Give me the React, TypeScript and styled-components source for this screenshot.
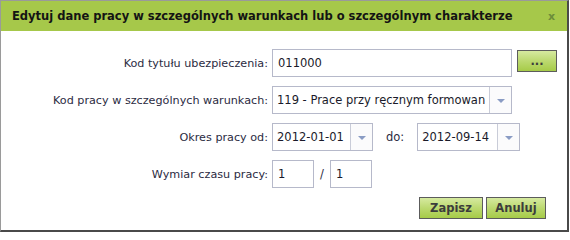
import React from "react";
import styled, { createGlobalStyle } from "styled-components";

const GlobalStyle = createGlobalStyle`
  html, body {
    margin: 0;
    padding: 0;
    background: #ffffff;
  }
  body {
    font-family: "DejaVu Sans", Tahoma, Verdana, sans-serif;
  }
`;

const Dialog = styled.div`
  width: 569px;
  box-sizing: border-box;
  border-top: 1px solid #9a9a9a;
  border-left: 1px solid #9a9a9a;
  border-right: 2px solid #4a4a4a;
  border-bottom: 2px solid #4a4a4a;
  background: #ffffff;
`;

const Header = styled.div`
  height: 30px;
  background: #a6c84a;
  display: flex;
  align-items: center;
  justify-content: space-between;
  padding: 0 12px 0 11px;
`;

const Title = styled.div`
  font-weight: bold;
  font-size: 11.5px;
  color: #141414;
  white-space: nowrap;
`;

const Close = styled.span`
  font-weight: bold;
  font-size: 11px;
  color: #6c8c3a;
  cursor: pointer;
`;

const Body = styled.div`
  padding: 18px 21px 11px 0;
`;

const Form = styled.div`
  display: grid;
  grid-template-columns: 267px 1fr;
  column-gap: 4px;
  row-gap: 9px;
  align-items: center;
`;

const Label = styled.label`
  text-align: right;
  font-size: 11.2px;
  color: #2b2b3f;
  white-space: nowrap;
`;

const Controls = styled.div<{ $gap?: number }>`
  display: flex;
  align-items: center;
  gap: ${({ $gap }) => $gap ?? 5}px;
`;

const TextInput = styled.input<{ $width: number }>`
  box-sizing: border-box;
  width: ${({ $width }) => $width}px;
  height: 28px;
  border: 1px solid #b6b9ca;
  padding: 0 5px;
  margin: 0;
  font-family: inherit;
  font-size: 11.5px;
  color: #1a1a2a;
  background: #ffffff;
  outline: none;
`;

const Combo = styled.div<{ $width: number }>`
  box-sizing: border-box;
  width: ${({ $width }) => $width}px;
  height: 28px;
  border: 1px solid #b6b9ca;
  display: flex;
  background: #ffffff;
`;

const ComboText = styled.div`
  flex: 1;
  min-width: 0;
  overflow: hidden;
  white-space: nowrap;
  padding: 0 4px;
  display: flex;
  align-items: center;
  font-size: 11.5px;
  color: #1a1a2a;
`;

const ComboArrow = styled.div`
  width: 22px;
  flex: none;
  border-left: 1px solid #c9ccd8;
  background: #fbfbfc;
  display: flex;
  align-items: center;
  justify-content: center;
  padding-top: 2px;
  box-sizing: border-box;
`;

const Triangle = styled.span`
  width: 0;
  height: 0;
  border-left: 4px solid transparent;
  border-right: 4px solid transparent;
  border-top: 4px solid #8a9cc4;
`;

const InlineText = styled.span<{ $pad: number }>`
  font-size: 11.5px;
  color: #2b2b3f;
  padding: 0 ${({ $pad }) => $pad}px;
`;

const Footer = styled.div`
  display: flex;
  justify-content: flex-end;
  gap: 3px;
  margin-top: 9px;
`;

const Button = styled.button<{ $width: number; $top?: boolean }>`
  box-sizing: border-box;
  width: ${({ $width }) => $width}px;
  height: 22px;
  margin: 0;
  padding: 0;
  align-self: ${({ $top }) => ($top ? "flex-start" : "auto")};
  margin-top: ${({ $top }) => ($top ? 1 : 0)}px;
  border: 1px solid #5c5c5c;
  background: linear-gradient(to bottom, #d6eaa0 0%, #bcd970 50%, #a6cb48 100%);
  font-family: inherit;
  font-weight: bold;
  font-size: 11.5px;
  color: #3c3c3c;
  cursor: pointer;
`;

const ComboBox = ({ value, width }: { value: string; width: number }) => (
  <Combo $width={width}>
    <ComboText>{value}</ComboText>
    <ComboArrow>
      <Triangle />
    </ComboArrow>
  </Combo>
);

export default function App() {
  return (
    <>
      <GlobalStyle />
      <Dialog>
        <Header>
          <Title>Edytuj dane pracy w szczególnych warunkach lub o szczególnym charakterze</Title>
          <Close>x</Close>
        </Header>
        <Body>
          <Form>
            <Label>Kod tytułu ubezpieczenia:</Label>
            <Controls>
              <TextInput $width={240} defaultValue="011000" />
              <Button $width={40} $top>...</Button>
            </Controls>

            <Label>Kod pracy w szczególnych warunkach:</Label>
            <Controls>
              <ComboBox width={240} value="119 - Prace przy ręcznym formowan" />
            </Controls>

            <Label>Okres pracy od:</Label>
            <Controls $gap={0}>
              <ComboBox width={101} value="2012-01-01" />
              <InlineText $pad={13}>do:</InlineText>
              <ComboBox width={103} value="2012-09-14" />
            </Controls>

            <Label>Wymiar czasu pracy:</Label>
            <Controls $gap={0}>
              <TextInput $width={42} defaultValue="1" />
              <InlineText $pad={6}>/</InlineText>
              <TextInput $width={42} defaultValue="1" />
            </Controls>
          </Form>
          <Footer>
            <Button $width={64}>Zapisz</Button>
            <Button $width={60}>Anuluj</Button>
          </Footer>
        </Body>
      </Dialog>
    </>
  );
}
